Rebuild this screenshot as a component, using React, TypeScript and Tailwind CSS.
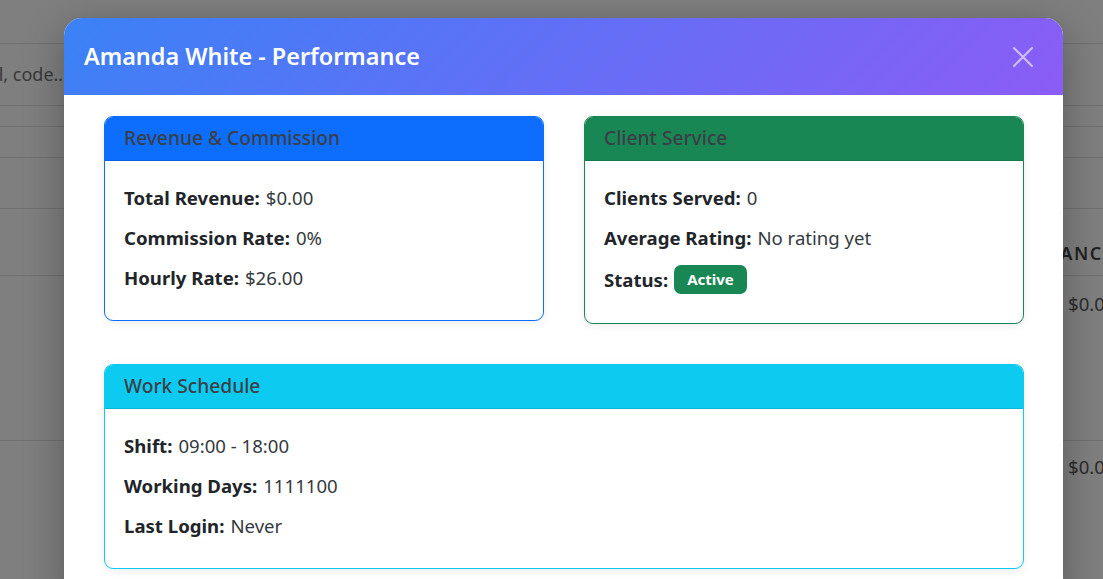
import React from "react";

const Row: React.FC<{ label: string; children: React.ReactNode; last?: boolean }> = ({
  label,
  children,
  last,
}) => (
  <div className={`flex items-center leading-[27px] ${last ? "" : "mb-[13px]"}`}>
    <span className="font-bold text-[#212529]">{label}</span>
    <span className="ml-[6px] text-[#343a40]">{children}</span>
  </div>
);

const Card: React.FC<{
  title: string;
  border: string;
  head: string;
  children: React.ReactNode;
}> = ({ title, border, head, children }) => (
  <div className={`rounded-[9px] border overflow-hidden bg-white shadow-[0_2px_8px_rgba(0,0,0,0.08)] ${border}`}>
    <div className={`h-[44px] px-[19px] flex items-center border-b border-black/10 text-[19.2px] font-medium text-[#3a3f47] ${head}`}>
      {title}
    </div>
    <div className="px-[19px] pt-[23px] pb-[29px] text-[18.6px]">{children}</div>
  </div>
);

export default function App() {
  return (
    <div
      className="relative w-full h-[579px] overflow-hidden bg-[#7f7f7f]"
      style={{ fontFamily: '"Noto Sans", "Open Sans", sans-serif' }}
    >
      {/* page behind the backdrop */}
      <div className="flex flex-col text-[#2b2b2b]">
        <div className="h-[44px] border-b border-[#707070]" />
        <div className="h-[62px] border-b border-[#707070] flex items-center">
          <span className="ml-[-187px] whitespace-nowrap text-[18px] text-[#383838]">
            Search by name, email, code...
          </span>
        </div>
        <div className="h-[21px] border-b border-[#707070]" />
        <div className="h-[31px] border-b border-[#707070]" />
        <div className="h-[51px] border-b border-[#707070]" />
        <div className="h-[67px] border-b border-[#707070] flex items-end pb-[8px]">
          <span className="ml-[1022px] whitespace-nowrap text-[18px] font-semibold tracking-[1.5px] text-[#222]">
            BALANCE
          </span>
        </div>
        <div className="h-[165px] border-b border-[#707070] pt-[14px]">
          <span className="ml-[1068px] text-[18.6px] text-[#2a2a2a] whitespace-nowrap">$0.00</span>
        </div>
        <div className="pt-[12px]">
          <span className="ml-[1068px] text-[18.6px] text-[#2a2a2a] whitespace-nowrap">$0.00</span>
        </div>
      </div>

      {/* modal */}
      <div className="absolute left-[64px] top-[18px] w-[999px] rounded-[18px] overflow-hidden bg-white shadow-[0_10px_40px_rgba(0,0,0,0.3)]">
        <div className="h-[77px] px-[20px] flex items-center justify-between bg-[linear-gradient(135deg,#3b82f6_0%,#8b5cf6_100%)]">
          <h2 className="text-[23.4px] font-semibold text-white">Amanda White - Performance</h2>
          <svg width="22" height="22" viewBox="0 0 22 22" className="mr-[9px]">
            <path d="M2 2L20 20M20 2L2 20" stroke="#cdbffc" strokeWidth="2.2" strokeLinecap="round" />
          </svg>
        </div>

        <div className="pl-[40px] pr-[39px] pt-[21px] pb-[40px]">
          <div className="grid grid-cols-2 gap-[40px] items-start">
            <Card title="Revenue & Commission" border="border-[#0d6efd]" head="bg-[#0d6efd]">
              <Row label="Total Revenue:">$0.00</Row>
              <Row label="Commission Rate:">0%</Row>
              <Row label="Hourly Rate:" last>
                $26.00
              </Row>
            </Card>
            <Card title="Client Service" border="border-[#198754]" head="bg-[#198754]">
              <Row label="Clients Served:">0</Row>
              <Row label="Average Rating:">No rating yet</Row>
              <Row label="Status:" last>
                <span className="inline-flex items-center h-[29px] px-[13px] rounded-[7px] bg-[#198754] text-white text-[15px] font-bold">
                  Active
                </span>
              </Row>
            </Card>
          </div>
          <div className="mt-[40px]">
            <Card title="Work Schedule" border="border-[#0dcaf0]" head="bg-[#0dcaf0]">
              <Row label="Shift:">09:00 - 18:00</Row>
              <Row label="Working Days:">1111100</Row>
              <Row label="Last Login:" last>
                Never
              </Row>
            </Card>
          </div>
        </div>
      </div>
    </div>
  );
}
